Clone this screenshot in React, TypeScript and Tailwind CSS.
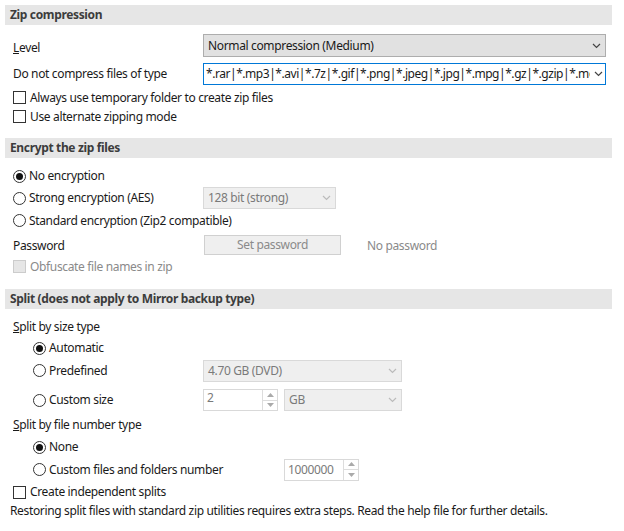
import React from "react";

const Chev = ({ c = "#444" }: { c?: string }) => (
  <svg width="9" height="6" viewBox="0 0 9 6" className="shrink-0"><path d="M1 1l3.5 3.5L8 1" stroke={c} strokeWidth="1.2" fill="none" /></svg>
);
const Box = ({ dis }: { dis?: boolean }) => (
  <span className={`inline-block shrink-0 w-[13px] h-[13px] border ${dis ? "border-[#cccccc] bg-[#e6e6e6]" : "border-[#333] bg-white"} mr-[4px]`} />
);
const Radio = ({ on }: { on?: boolean }) => (
  <span className="inline-flex shrink-0 items-center justify-center w-[13px] h-[13px] rounded-full border border-[#333] bg-white mr-[3px]">
    {on && <span className="w-[7px] h-[7px] rounded-full bg-[#111]" />}
  </span>
);
const Header = ({ t }: { t: string }) => (
  <div className="h-[20px] bg-[#e6e6e6] ml-[5px] w-[607px] flex items-center pl-[5px] font-bold text-[#3c3c3c]">{t}</div>
);
const Spin = () => (
  <div className="flex flex-col border-l border-[#ddd] w-[15px] h-full">
    <div className="flex-1 flex items-center justify-center border-b border-[#ddd]"><svg width="7" height="4"><path d="M0 4L3.5 0L7 4z" fill="#aaa" /></svg></div>
    <div className="flex-1 flex items-center justify-center"><svg width="7" height="4"><path d="M0 0L3.5 4L7 0z" fill="#aaa" /></svg></div>
  </div>
);

export default function App() {
  return (
    <div className="w-[624px] h-[531px] overflow-hidden bg-white text-[12px] tracking-[-0.35px] text-[#1a1a1a] pt-[5px]" style={{ fontFamily: '"Noto Sans", sans-serif' }}>
      <Header t="Zip compression" />
      <div className="h-[9px]" />
      <div className="flex items-center h-[23px]">
        <span className="w-[203px] pl-[13px] pt-[4px]"><u>L</u>evel</span>
        <div className="w-[403px] h-[23px] border border-[#adadad] bg-[#e1e1e1] flex items-center justify-between px-[4px]">
          <span>Normal compression (Medium)</span><Chev />
        </div>
      </div>
      <div className="h-[6px]" />
      <div className="flex items-center h-[22px]">
        <span className="w-[203px] pl-[13px]">Do not compress files of type</span>
        <div className="w-[403px] h-[22px] border border-[#0078d7] bg-white flex items-center justify-between px-[2px] gap-[4px]">
          <span className="min-w-0 overflow-hidden whitespace-nowrap tracking-[-0.45px]">*.rar|*.mp3|*.avi|*.7z|*.gif|*.png|*.jpeg|*.jpg|*.mpg|*.gz|*.gzip|*.mov|*.swf</span><Chev />
        </div>
      </div>
      <div className="h-[19px] flex items-center pl-[13px] mt-[3px]"><Box />Always use temporary folder to create zip files</div>
      <div className="h-[19px] flex items-center pl-[13px]"><Box />Use alternate zipping mode</div>
      <div className="h-[12px]" />
      <Header t="Encrypt the zip files" />
      <div className="h-[7px]" />
      <div className="h-[22px] flex items-center pl-[13px]"><Radio on />No encryption</div>
      <div className="h-[22px] flex items-center">
        <span className="w-[203px] pl-[13px] flex items-center"><Radio />Strong encryption (AES)</span>
        <div className="w-[133px] h-[22px] border border-[#d9d9d9] bg-[#efefef] text-[#7a7a7a] flex items-center justify-between px-[4px]"><span>128 bit (strong)</span><Chev c="#bbb" /></div>
      </div>
      <div className="h-[23px] flex items-center pl-[13px]"><Radio />Standard encryption (Zip2 compatible)</div>
      <div className="h-[25px] flex items-center">
        <span className="w-[204px] pl-[13px] pt-[3px]">Password</span>
        <div className="w-[137px] h-[20px] border border-[#d0d0d0] bg-[#efefef] text-[#8a8a8a] flex items-center justify-center">Set password</div>
        <span className="ml-[26px] pt-[3px] text-[#8a8a8a]">No password</span>
      </div>
      <div className="h-[19px] flex items-center pl-[13px] text-[#8a8a8a]"><Box dis />Obfuscate file names in zip</div>
      <div className="h-[13px]" />
      <Header t="Split (does not apply to Mirror backup type)" />
      <div className="h-[8px]" />
      <div className="h-[20px] flex items-center pl-[13px]"><span><u>S</u>plit by size type</span></div>
      <div className="h-[22px] flex items-center pl-[33px]"><Radio on />Automatic</div>
      <div className="h-[23px] flex items-center">
        <span className="w-[203px] pl-[33px] flex items-center"><Radio />Predefined</span>
        <div className="w-[199px] h-[22px] border border-[#d9d9d9] bg-[#efefef] text-[#7a7a7a] flex items-center justify-between px-[4px]"><span>4.70 GB (DVD)</span><Chev c="#bbb" /></div>
      </div>
      <div className="h-[7px]" />
      <div className="h-[22px] flex items-center">
        <span className="w-[203px] pl-[33px] flex items-center"><Radio />Custom size</span>
        <div className="w-[75px] h-[22px] border border-[#d9d9d9] bg-white text-[#7a7a7a] flex items-stretch"><span className="flex-1 pl-[3px] leading-[16px]">2</span><Spin /></div>
        <div className="ml-[6px] w-[118px] h-[22px] border border-[#d9d9d9] bg-[#efefef] text-[#7a7a7a] flex items-center justify-between px-[4px]"><span>GB</span><Chev c="#bbb" /></div>
      </div>
      <div className="h-[25px] flex items-center pl-[13px] pt-[3px]"><span><u>S</u>plit by file number type</span></div>
      <div className="h-[22px] flex items-center pl-[33px]"><Radio on />None</div>
      <div className="h-[23px] flex items-center">
        <span className="w-[284px] pl-[33px] flex items-center"><Radio />Custom files and folders number</span>
        <div className="w-[75px] h-[22px] border border-[#d9d9d9] bg-white text-[#7a7a7a] flex items-stretch"><span className="flex-1 pl-[3px] flex items-center">1000000</span><Spin /></div>
      </div>
      <div className="h-[21px] flex items-center pl-[13px] pt-[1px]"><Box />Create independent splits</div>
      <div className="h-[17px] flex items-center pl-[10px]">Restoring split files with standard zip utilities requires extra steps. Read the help file for further details.</div>
    </div>
  );
}
